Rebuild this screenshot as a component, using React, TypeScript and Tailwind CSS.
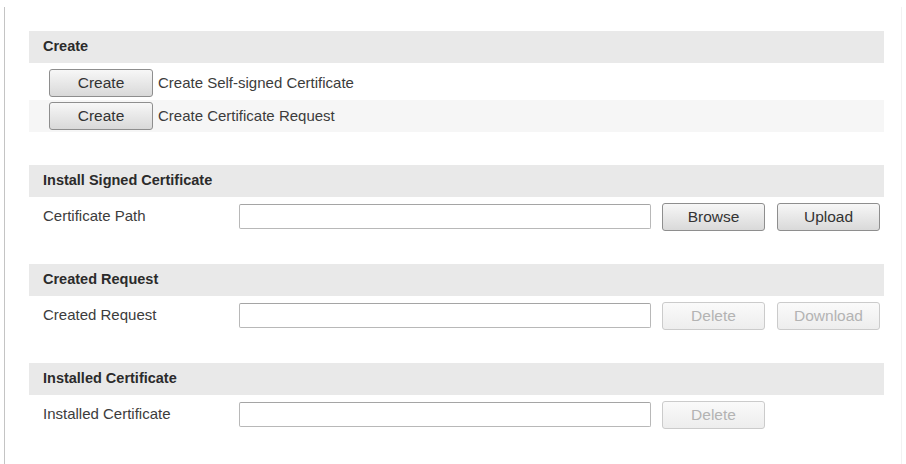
const font = { fontFamily: '"Liberation Sans", Arial, sans-serif' };

function Btn({ label, disabled = false, w = "w-[103px]" }: { label: string; disabled?: boolean; w?: string }) {
  return (
    <button
      disabled={disabled}
      className={
        disabled
          ? `${w} h-[28px] rounded-[3px] border border-[#cbcbcb] bg-gradient-to-b from-[#fafafa] to-[#ededed] text-[15.5px] text-[#b3b3b3] leading-none`
          : `${w} h-[28px] rounded-[3px] border border-[#8e8e8e] bg-gradient-to-b from-[#f7f7f7] to-[#d9d9d9] text-[15.5px] text-[#333] leading-none`
      }
    >
      {label}
    </button>
  );
}

function Header({ title }: { title: string }) {
  return (
    <div className="h-[32px] bg-[#e9e9e9] flex items-center pl-[14px] text-[14.5px] font-bold text-[#2b2b2b]">
      {title}
    </div>
  );
}

function Field({ label, children }: { label: string; children?: React.ReactNode }) {
  return (
    <div className="h-[39px] flex items-center pl-[14px]">
      <span className="w-[196px] text-[15px] text-[#3c3c3c]">{label}</span>
      <div className="w-[412px] h-[25px] border border-[#b8b8b8] border-t-[#a5a5a5] rounded-[2px] bg-white" />
      <div className="flex gap-[12px] ml-[11px]">{children}</div>
    </div>
  );
}

export default function App() {
  return (
    <div className="w-[906px] h-[464px] bg-white pl-[4px] pt-[7px]" style={font}>
      <div className="w-[898px] h-[457px] border-l border-r border-l-[#c4c4c4] border-r-[#f2f2f2] pl-[24px] pr-[17px] pt-[24px]">
        {/* Create */}
        <Header title="Create" />
        <div className="h-[37px] flex items-center pl-[20px] pt-[3px]">
          <Btn label="Create" w="w-[104px]" />
          <span className="ml-[5px] text-[15px] text-[#3c3c3c]">Create Self-signed Certificate</span>
        </div>
        <div className="h-[32px] flex items-center pl-[20px] bg-[#f6f6f6]">
          <Btn label="Create" w="w-[104px]" />
          <span className="ml-[5px] text-[15px] text-[#3c3c3c]">Create Certificate Request</span>
        </div>

        <div className="mt-[33px]">
          <Header title="Install Signed Certificate" />
          <Field label="Certificate Path">
            <Btn label="Browse" />
            <Btn label="Upload" />
          </Field>
        </div>

        <div className="mt-[28px]">
          <Header title="Created Request" />
          <Field label="Created Request">
            <Btn label="Delete" disabled />
            <Btn label="Download" disabled />
          </Field>
        </div>

        <div className="mt-[28px]">
          <Header title="Installed Certificate" />
          <Field label="Installed Certificate">
            <Btn label="Delete" disabled />
          </Field>
        </div>
      </div>
    </div>
  );
}
